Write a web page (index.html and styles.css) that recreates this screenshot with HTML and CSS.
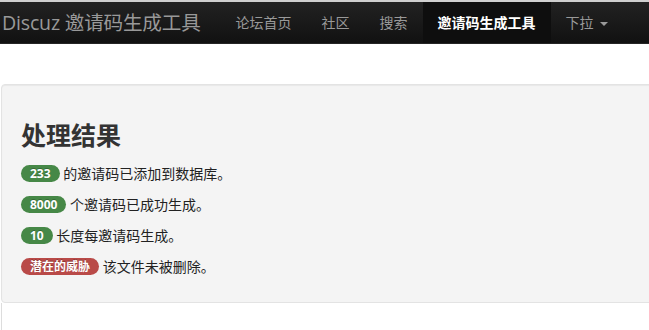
FILE: index.html
```html
<!DOCTYPE html>
<html lang="zh-CN">
<head>
    <meta charset="UTF-8">
    <meta name="viewport" content="width=device-width, initial-scale=1.0">
    <title>Discuz 邀请码生成工具</title>
    <link rel="stylesheet" href="styles.css">
</head>
<body>
    <div class="navbar">
        <a class="brand" href="#">Discuz 邀请码生成工具</a>
        <ul class="nav">
            <li><a href="#">论坛首页</a></li>
            <li><a href="#">社区</a></li>
            <li><a href="#">搜索</a></li>
            <li class="active"><a href="#">邀请码生成工具</a></li>
            <li><a href="#">下拉 <span class="caret"></span></a></li>
        </ul>
    </div>

    <div class="container">
        <div class="well">
            <h2>处理结果</h2>
            <p><span class="badge badge-success">233</span> 的邀请码已添加到数据库。</p>
            <p><span class="badge badge-success">8000</span> 个邀请码已成功生成。</p>
            <p><span class="badge badge-success">10</span> 长度每邀请码生成。</p>
            <p><span class="badge badge-important">潜在的威胁</span> 该文件未被删除。</p>
        </div>
        <div class="rest"></div>
    </div>
</body>
</html>
```

FILE: styles.css
```css
*{
    margin: 0;
    padding: 0;
    box-sizing: border-box;
}

body{
    font-family: "Open Sans", "Noto Sans CJK SC", sans-serif;
    font-size: 14px;
    color: #333;
    background-color: #fff;
    overflow: hidden;
}

a{
    text-decoration: none;
}

.navbar{
    display: flex;
    align-items: center;
    height: 44px;
    background: linear-gradient(#222, #111);
    border-top: 2px solid #cfcfcf;
    border-bottom: 1px solid #252525;
}

.brand{
    padding: 0 20px 0 2px;
    font-size: 19.6px;
    color: #999;
    line-height: 41px;
    letter-spacing: -0.2px;
}

.nav{
    display: flex;
    list-style: none;
    height: 100%;
}

.nav li a{
    display: block;
    padding: 0 15px;
    line-height: 41px;
    color: #999;
    font-size: 14px;
}

.nav li.active a{
    background-color: #0e0e0e;
    color: #fff;
    font-weight: bold;
}

.caret{
    display: inline-block;
    width: 0;
    height: 0;
    margin-left: 3px;
    vertical-align: middle;
    border-top: 4px solid #999;
    border-left: 4px solid transparent;
    border-right: 4px solid transparent;
}

.container{
    padding: 40px 0 0 1px;
}

.well{
    margin-right: -10px;
    padding: 30px 19px 14px;
    background-color: #f4f4f4;
    border: 1px solid #e3e3e3;
    border-radius: 4px;
    box-shadow: inset 0 1px 1px rgba(0, 0, 0, 0.05);
}

.well h2{
    font-size: 25px;
    font-weight: bold;
    line-height: 40px;
    margin-bottom: 9px;
}

.well p{
    line-height: 20px;
    margin-bottom: 11px;
    color: #222;
}

.badge{
    display: inline-block;
    padding: 0 9px;
    font-size: 12px;
    font-weight: bold;
    line-height: 17px;
    color: #fff;
    border-radius: 9px;
    text-shadow: 0 -1px 0 rgba(0, 0, 0, 0.25);
    vertical-align: 1px;
}

.badge-success{
    background-color: #468847;
}

.badge-important{
    background-color: #b94a48;
}

.rest{
    height: 40px;
    border-left: 1px solid #ddd;
}
```
